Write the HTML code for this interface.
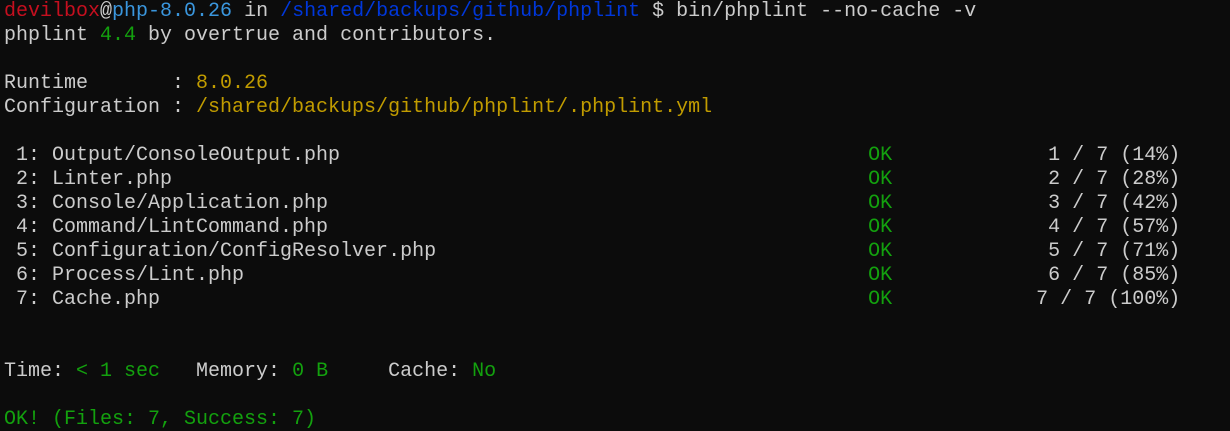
<!DOCTYPE html>
<html><head><meta charset="utf-8"><style>
html,body{margin:0;padding:0;background:#0c0c0c;width:1230px;height:431px;overflow:hidden}
pre{margin:0;padding:0 0 0 4px;position:relative;top:0px;font-family:"Liberation Mono",monospace;font-size:20px;line-height:24px;color:#cccccc}
.r{color:#c50f1f}.lb{color:#3a96dd}.b{color:#0037da}.g{color:#13a10e}.y{color:#c19c00}
</style></head><body><pre><span class="r">devilbox</span>@<span class="lb">php-8.0.26</span> in <span class="b">/shared/backups/github/phplint</span> $ bin/phplint --no-cache -v
phplint <span class="g">4.4</span> by overtrue and contributors.

Runtime       : <span class="y">8.0.26</span>
Configuration : <span class="y">/shared/backups/github/phplint/.phplint.yml</span>

 1: Output/ConsoleOutput.php                                            <span class="g">OK</span>             1 / 7 (14%)
 2: Linter.php                                                          <span class="g">OK</span>             2 / 7 (28%)
 3: Console/Application.php                                             <span class="g">OK</span>             3 / 7 (42%)
 4: Command/LintCommand.php                                             <span class="g">OK</span>             4 / 7 (57%)
 5: Configuration/ConfigResolver.php                                    <span class="g">OK</span>             5 / 7 (71%)
 6: Process/Lint.php                                                    <span class="g">OK</span>             6 / 7 (85%)
 7: Cache.php                                                           <span class="g">OK</span>            7 / 7 (100%)


Time: <span class="g">&lt; 1 sec</span>   Memory: <span class="g">0 B</span>     Cache: <span class="g">No</span>

<span class="g">OK! (Files: 7, Success: 7)</span></pre></body></html>
